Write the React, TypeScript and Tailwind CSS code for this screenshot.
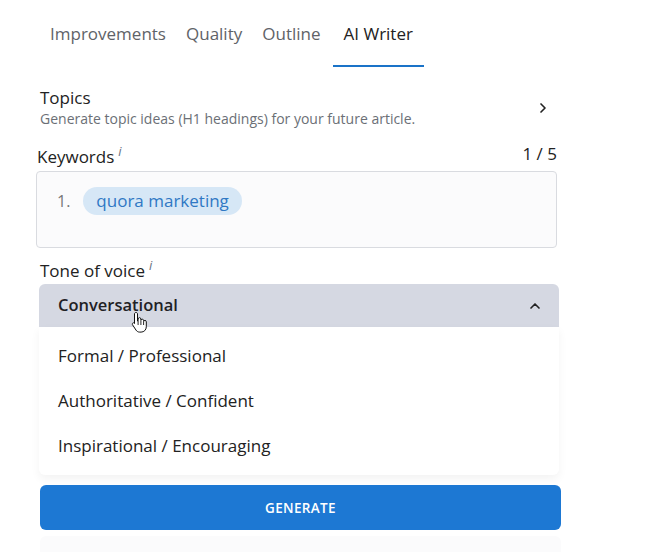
import { ChevronRight, ChevronUp } from "lucide-react";

const tabs = ["Improvements", "Quality", "Outline", "AI Writer"];
const tones = ["Formal / Professional", "Authoritative / Confident", "Inspirational / Encouraging"];

function Info() {
  return <span className="ml-1 align-super text-[13px] italic text-gray-500">i</span>;
}

export default function App() {
  return (
    <div
      className="relative h-[552px] w-[645px] overflow-hidden bg-white text-[#222]"
      style={{ fontFamily: '"Open Sans", "Noto Sans", sans-serif' }}
    >
      {/* tabs */}
      <div className="flex gap-0 pl-[40px] pt-[20px]">
        {tabs.map((t) => {
          const active = t === "AI Writer";
          return (
            <div
              key={t}
              className={
                "border-b-2 px-[10px] pb-[17px] text-[17px] leading-[28px] " +
                (active ? "ml-[2px] border-[#1a73c8] px-[11px] text-[#222]" : "border-transparent text-[#5f6368]")
              }
            >
              {t}
            </div>
          );
        })}
      </div>

      {/* topics */}
      <div className="flex items-center justify-between pl-[40px] pr-[94px] pt-[20px]">
        <div>
          <div className="text-[17px] leading-[22px] text-[#222]">Topics</div>
          <div className="text-[14px] leading-[20px] text-[#6b6f76]">
            Generate topic ideas (H1 headings) for your future article.
          </div>
        </div>
        <ChevronRight className="h-4 w-4 text-[#222]" strokeWidth={2.5} />
      </div>

      {/* keywords */}
      <div className="ml-[36px] mt-[10px] w-[521px]">
        <div className="flex items-center justify-between pl-px text-[17px] leading-[24px]">
          <span>
            Keywords
            <Info />
          </span>
          <span>1 / 5</span>
        </div>
        <div className="mt-[2px] h-[77px] rounded-[4px] border border-[#d9dbe0] bg-[#fbfbfc] pl-[20px] pt-[15px]">
          <div className="flex items-center gap-[13px]">
            <span className="text-[16px] text-[#777]">1.</span>
            <span className="rounded-full bg-[#d6e7f6] px-[13px] py-[3px] text-[17px] leading-[22px] text-[#2f78c4]">
              quora marketing
            </span>
          </div>
        </div>
      </div>

      {/* tone */}
      <div className="ml-[39px] mt-[5px] w-[520px]">
        <div className="pl-px text-[17px] leading-[24px]">
          Tone of voice
          <Info />
        </div>
        <div className="mt-[2px] flex h-[43px] items-center justify-between rounded-t-[6px] bg-[#d5d8e2] pl-[19px] pr-[16px]">
          <span className="text-[16.5px] font-semibold text-[#1f2125]">Conversational</span>
          <ChevronUp className="h-4 w-4 text-[#222]" strokeWidth={2.5} />
        </div>
        <div className="rounded-b-[6px] bg-white pb-[7px] pt-[6px] shadow-[0_4px_10px_rgba(0,0,0,0.05)]">
          {tones.map((t) => (
            <div key={t} className="flex h-[45px] items-center pl-[19px] text-[17px] text-[#222]">
              {t}
            </div>
          ))}
        </div>
      </div>

      {/* generate */}
      <div className="ml-[40px] mt-[10px] w-[521px]">
        <button className="flex h-[45px] w-full items-center justify-center rounded-[6px] bg-[#1d78d3] text-[13.5px] font-semibold tracking-wide text-white">
          GENERATE
        </button>
        <div className="mt-[6px] h-[20px] rounded-t-[6px] bg-[#fbfbfc]" />
      </div>

      {/* cursor */}
      <svg
        className="absolute left-[131px] top-[311px]"
        width="18"
        height="22"
        viewBox="0 0 18 22"
      >
        <path
          d="M5 1.5c.9 0 1.5.6 1.5 1.5v7l.6-.1V8c0-.8.6-1.4 1.4-1.4s1.4.6 1.4 1.4v1.5c0-.8.6-1.3 1.4-1.3s1.3.6 1.3 1.4v1c.1-.7.7-1.2 1.4-1.2.8 0 1.3.6 1.3 1.4v5c0 3-2.2 5.3-5.2 5.3H8.7c-1.6 0-2.8-.7-3.7-2L1.6 13.9c-.5-.7-.3-1.5.3-1.9.6-.4 1.4-.3 1.9.3l-.3.2V3c0-.9.6-1.5 1.5-1.5z"
          fill="#fff"
          stroke="#111"
          strokeWidth="1"
        />
        <path d="M7.1 10v4M9.9 10v4M12.6 11v3" stroke="#111" strokeWidth="0.9" />
      </svg>
    </div>
  );
}
